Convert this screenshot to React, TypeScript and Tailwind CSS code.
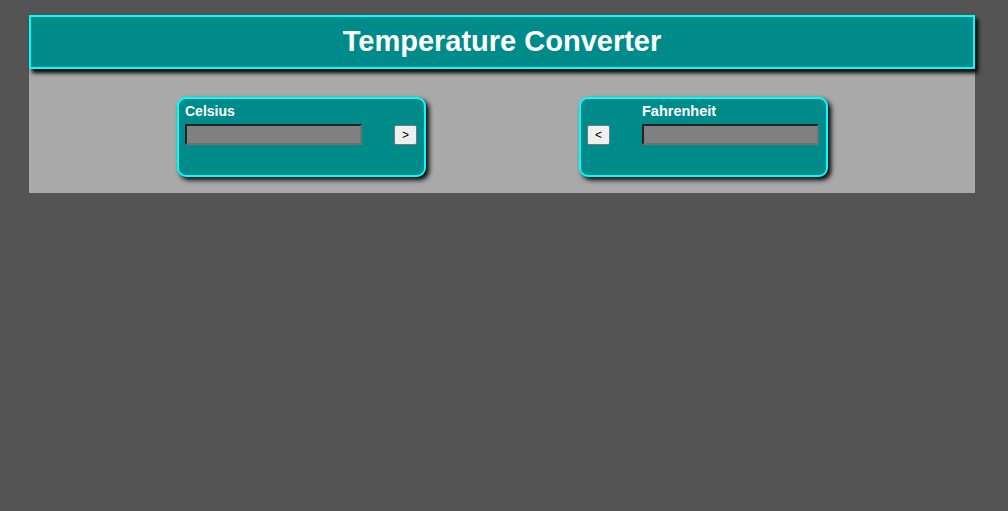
export default function App() {
  return (
    <div className="min-h-screen bg-[#545454] pt-[15px] font-['Liberation_Sans',Arial,sans-serif]">
      <div className="ml-[29px] w-[946px] bg-[#a9a9a9] pb-[16px]">
        {/* Title bar */}
        <header className="flex h-[54px] items-center justify-center border-2 border-[#00ffff] bg-[#008b8b] shadow-[3px_4px_4px_#000]">
          <h1 className="text-[29px] font-bold text-white">Temperature Converter</h1>
        </header>

        <div className="flex gap-[153px] pl-[148px] pt-[28px]">
          {/* Celsius */}
          <div className="h-[80px] w-[249px] rounded-[9px] border-2 border-[#00ffff] bg-[#008b8b] pl-[6px] pr-[7px] pt-[4px] shadow-[3px_3px_5px_#000]">
            <label className="block text-[14px] leading-[17px] font-bold text-white">Celsius</label>
            <div className="mt-[4px] flex items-start justify-between">
              <input className="h-[21px] w-[177px] border-2 border-t-[#222] border-l-[#222] border-b-[#707070] border-r-[#707070] bg-[#808080] outline-none" />
              <button className="mt-px h-[20px] w-[23px] rounded-[2px] border border-[#767676] bg-[#efefef] text-[12px] leading-none text-black">&gt;</button>
            </div>
          </div>

          {/* Fahrenheit */}
          <div className="flex h-[80px] w-[249px] rounded-[9px] border-2 border-[#00ffff] bg-[#008b8b] pl-[6px] pr-[4px] pt-[4px] shadow-[3px_3px_5px_#000]">
            <button className="mt-[22px] h-[20px] w-[23px] rounded-[2px] border border-[#767676] bg-[#efefef] text-[12px] leading-none text-black">&lt;</button>
            <div className="ml-[32px]">
              <label className="block text-[14.5px] leading-[17px] font-bold text-white">Fahrenheit</label>
              <input className="mt-[4px] h-[21px] w-[177px] border-2 border-t-[#222] border-l-[#222] border-b-[#707070] border-r-[#707070] bg-[#808080] outline-none" />
            </div>
          </div>
        </div>
      </div>
    </div>
  );
}
